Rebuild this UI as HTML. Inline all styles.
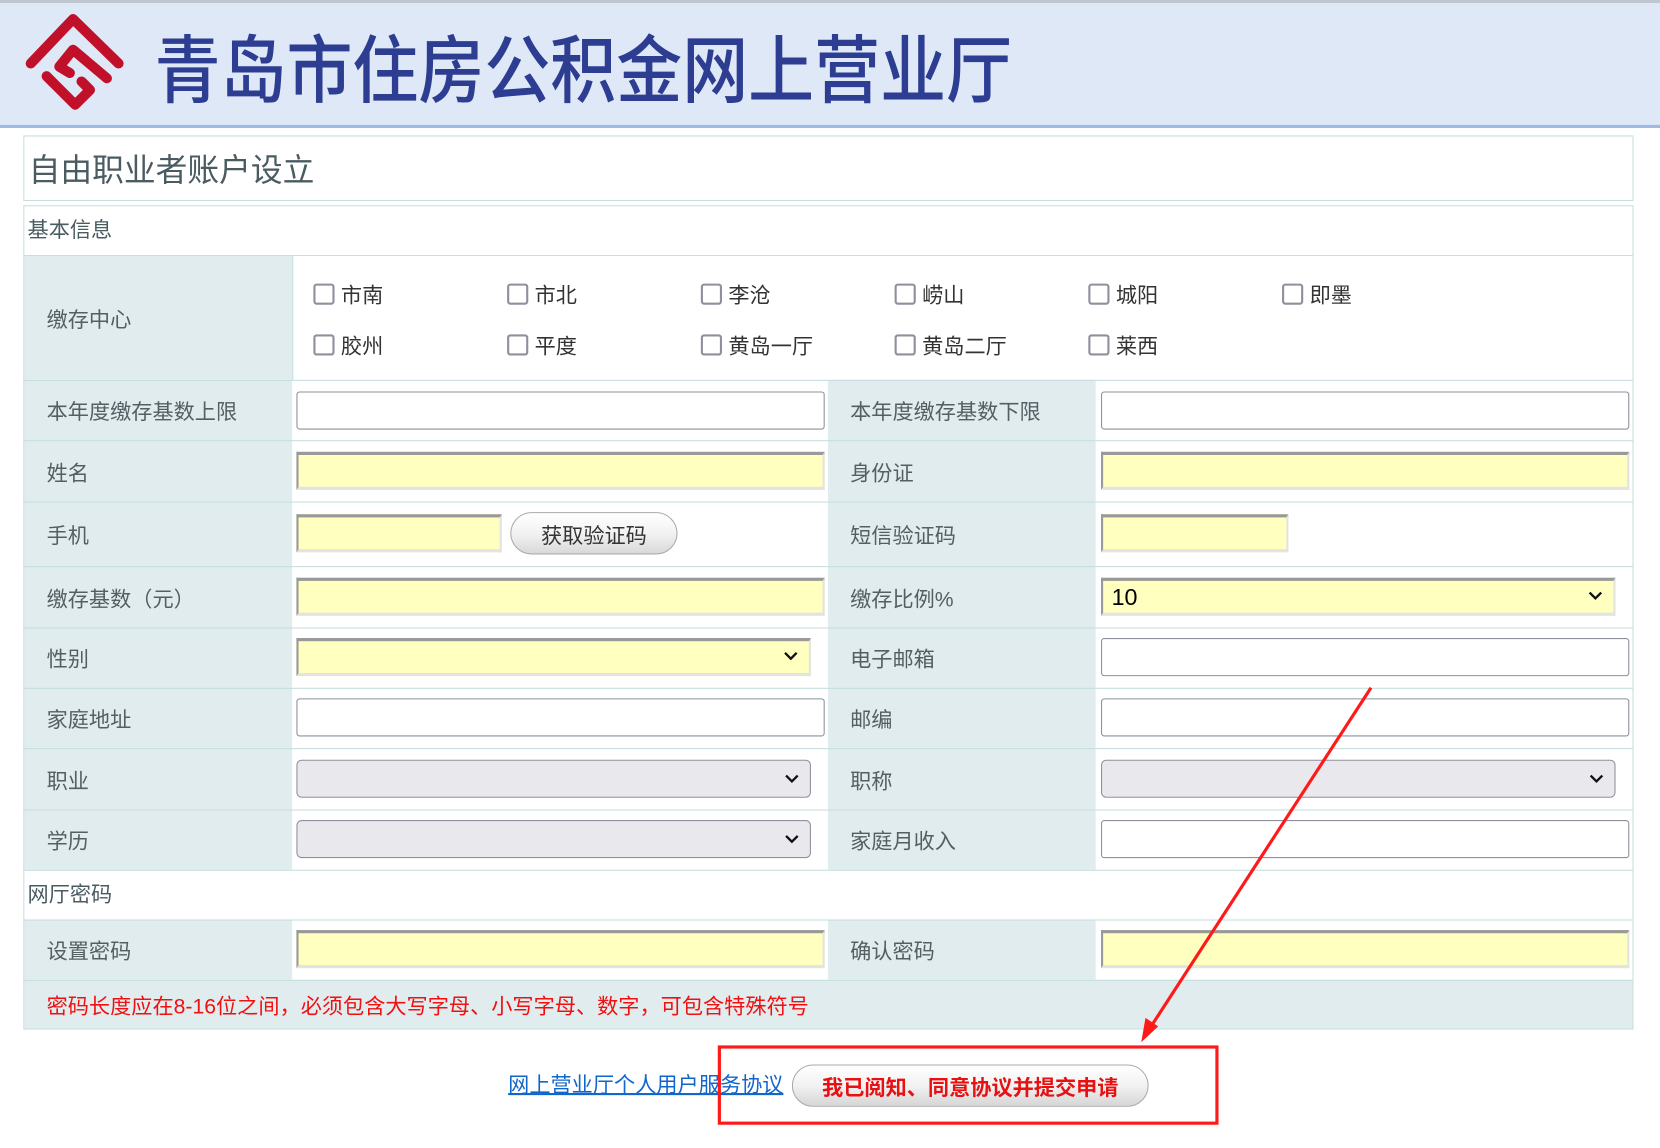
<!DOCTYPE html>
<html><head><meta charset="utf-8">
<style>
html,body{margin:0;padding:0;background:#fff;width:1660px;height:1148px;overflow:hidden}
#w{position:absolute;left:0;top:0;width:1568px;height:1085px;transform:scale(1.05867,1.0581);transform-origin:0 0;font-family:"Liberation Sans","Noto Sans CJK SC",sans-serif}
.a{position:absolute;box-sizing:border-box}
.lab{position:absolute;box-sizing:border-box;background:#e1ecef;color:#555f63;font-size:20px;display:flex;align-items:center;padding-left:21px}
.hl{position:absolute;left:22px;width:1521px;height:1px;background:#c5dede}
.inp{position:absolute;box-sizing:border-box;height:36px;background:#fff;border:1px solid #8f8f9d;border-radius:3px}
.yel{position:absolute;box-sizing:border-box;height:36px;background:#ffffc0;border-top:3px solid #999;border-left:2px solid #999;border-right:2px solid #e3e3e3;border-bottom:3px solid #e3e3e3}
.gsel{position:absolute;box-sizing:border-box;height:36px;background:#e9e9ed;border:1px solid #8f8f9d;border-radius:5px}
.chev{position:absolute;right:10px;top:10px}
.cb{position:absolute;font-size:20px;color:#333;display:flex;align-items:center}
.cb i{display:inline-block;border:2px solid #8f8f9d;border-radius:3px;margin-right:6px;box-sizing:border-box;width:20px;height:20px}
</style></head><body>
<div id="w">
<div class="a" style="left:0;top:0;width:1568px;height:3px;background:#bfc6d0"></div>
<div class="a" style="left:0;top:3px;width:1568px;height:115px;background:#dfe8f6"></div>
<div class="a" style="left:0;top:118px;width:1568px;height:3px;background:#9dbbe3"></div>
<svg class="a" style="left:0;top:0" width="130" height="120" viewBox="0 0 130 120">
<g fill="none" stroke="#c0102a" stroke-width="9.5" stroke-linecap="round" stroke-linejoin="round">
<polyline points="29,60 69,18 112,60"/>
<polyline points="66,69 56,63 69,47 101,74"/>
<polyline points="77,77 85,85 71,99 44,72"/>
</g></svg>
<div class="a" style="left:146px;top:18px;font-family:'Noto Sans CJK SC',sans-serif;font-weight:500;font-size:70px;line-height:88px;color:#2d3d91;white-space:nowrap;transform:scaleX(0.89);transform-origin:0 0">青岛市住房公积金网上营业厅</div>

<div class="a" style="left:22px;top:128px;width:1521px;height:62px;border:1px solid #c5dede"></div>
<div class="a" style="left:27px;top:140px;font-size:30px;color:#4a5b62;line-height:44px">自由职业者账户设立</div>

<div class="a" style="left:22px;top:194px;width:1521px;height:779px;border:1px solid #c5dede"></div>
<div class="a" style="left:26px;top:204px;font-size:20px;color:#4a5b62;line-height:28px">基本信息</div>

<div class="lab" style="left:23px;top:241px;width:253px;height:118px">缴存中心</div>
<div class="lab" style="left:23px;top:359px;width:253px;height:57px">本年度缴存基数上限</div>
<div class="lab" style="left:23px;top:416px;width:253px;height:58px">姓名</div>
<div class="lab" style="left:23px;top:474px;width:253px;height:61px">手机</div>
<div class="lab" style="left:23px;top:535px;width:253px;height:58px">缴存基数（元）</div>
<div class="lab" style="left:23px;top:593px;width:253px;height:57px">性别</div>
<div class="lab" style="left:23px;top:650px;width:253px;height:57px">家庭地址</div>
<div class="lab" style="left:23px;top:707px;width:253px;height:58px">职业</div>
<div class="lab" style="left:23px;top:765px;width:253px;height:57px">学历</div>
<div class="lab" style="left:23px;top:869px;width:253px;height:57px">设置密码</div>

<div class="lab" style="left:782px;top:359px;width:253px;height:57px">本年度缴存基数下限</div>
<div class="lab" style="left:782px;top:416px;width:253px;height:58px">身份证</div>
<div class="lab" style="left:782px;top:474px;width:253px;height:61px">短信验证码</div>
<div class="lab" style="left:782px;top:535px;width:253px;height:58px">缴存比例%</div>
<div class="lab" style="left:782px;top:593px;width:253px;height:57px">电子邮箱</div>
<div class="lab" style="left:782px;top:650px;width:253px;height:57px">邮编</div>
<div class="lab" style="left:782px;top:707px;width:253px;height:58px">职称</div>
<div class="lab" style="left:782px;top:765px;width:253px;height:57px">家庭月收入</div>
<div class="lab" style="left:782px;top:869px;width:253px;height:57px">确认密码</div>

<div class="lab" style="left:23px;top:926px;width:1519px;height:46px;color:#f01010">密码长度应在8-16位之间，必须包含大写字母、小写字母、数字，可包含特殊符号</div>
<div class="a" style="left:26px;top:832px;font-size:20px;color:#4a5b62;line-height:28px">网厅密码</div>

<div class="hl" style="top:241px"></div><div class="hl" style="top:359px"></div><div class="hl" style="top:416px"></div>
<div class="hl" style="top:474px"></div><div class="hl" style="top:535px"></div><div class="hl" style="top:593px"></div>
<div class="hl" style="top:650px"></div><div class="hl" style="top:707px"></div><div class="hl" style="top:765px"></div>
<div class="hl" style="top:822px"></div><div class="hl" style="top:869px"></div><div class="hl" style="top:926px"></div>
<div class="a" style="left:276px;top:241px;width:1px;height:118px;background:#c5dede"></div>

<div class="cb" style="left:296px;top:263px"><i></i>市南</div>
<div class="cb" style="left:479px;top:263px"><i></i>市北</div>
<div class="cb" style="left:662px;top:263px"><i></i>李沧</div>
<div class="cb" style="left:845px;top:263px"><i></i>崂山</div>
<div class="cb" style="left:1028px;top:263px"><i></i>城阳</div>
<div class="cb" style="left:1211px;top:263px"><i></i>即墨</div>
<div class="cb" style="left:296px;top:311px"><i></i>胶州</div>
<div class="cb" style="left:479px;top:311px"><i></i>平度</div>
<div class="cb" style="left:662px;top:311px"><i></i>黄岛一厅</div>
<div class="cb" style="left:845px;top:311px"><i></i>黄岛二厅</div>
<div class="cb" style="left:1028px;top:311px"><i></i>莱西</div>

<div class="inp" style="left:280px;top:370px;width:499px"></div>
<div class="inp" style="left:1040px;top:370px;width:499px"></div>
<div class="yel" style="left:280px;top:427px;width:499px"></div>
<div class="yel" style="left:1040px;top:427px;width:499px"></div>
<div class="yel" style="left:280px;top:486px;width:194px"></div>
<div class="a" style="left:482px;top:484px;width:158px;height:40px;border:1px solid #aaa;border-radius:20px;background:linear-gradient(#fff,#f2f2f2 50%,#d9d9d9);font-size:20px;color:#333;display:flex;align-items:center;justify-content:center">获取验证码</div>
<div class="yel" style="left:1040px;top:486px;width:177px"></div>
<div class="yel" style="left:280px;top:546px;width:499px"></div>
<div class="yel" style="left:1040px;top:546px;width:486px;font-size:22px;color:#000;line-height:32px;padding-left:8px">10<svg class="chev" style="top:9px" width="14" height="10" viewBox="0 0 14 10"><polyline points="1.5,2 7,7.5 12.5,2" fill="none" stroke="#111" stroke-width="2.2"/></svg></div>
<div class="yel" style="left:280px;top:603px;width:486px"><svg class="chev" style="top:9px" width="14" height="10" viewBox="0 0 14 10"><polyline points="1.5,2 7,7.5 12.5,2" fill="none" stroke="#111" stroke-width="2.2"/></svg></div>
<div class="inp" style="left:1040px;top:603px;width:499px"></div>
<div class="inp" style="left:280px;top:660px;width:499px"></div>
<div class="inp" style="left:1040px;top:660px;width:499px"></div>
<div class="gsel" style="left:280px;top:718px;width:486px"><svg class="chev" style="top:12px" width="14" height="10" viewBox="0 0 14 10"><polyline points="1.5,2 7,7.5 12.5,2" fill="none" stroke="#111" stroke-width="2.2"/></svg></div>
<div class="gsel" style="left:1040px;top:718px;width:486px"><svg class="chev" style="top:12px" width="14" height="10" viewBox="0 0 14 10"><polyline points="1.5,2 7,7.5 12.5,2" fill="none" stroke="#111" stroke-width="2.2"/></svg></div>
<div class="gsel" style="left:280px;top:775px;width:486px"><svg class="chev" style="top:12px" width="14" height="10" viewBox="0 0 14 10"><polyline points="1.5,2 7,7.5 12.5,2" fill="none" stroke="#111" stroke-width="2.2"/></svg></div>
<div class="inp" style="left:1040px;top:775px;width:499px"></div>
<div class="yel" style="left:280px;top:879px;width:499px"></div>
<div class="yel" style="left:1040px;top:879px;width:499px"></div>

<div class="a" style="left:480px;top:1012px;font-size:20px;line-height:28px;color:#1166cc;text-decoration:underline;white-space:nowrap">网上营业厅个人用户服务协议</div>
<div class="a" style="left:748px;top:1006px;width:337px;height:40px;border:1px solid #aaa;border-radius:20px;background:linear-gradient(#fff,#f2f2f2 50%,#d6d6d6);font-size:20px;font-weight:700;color:#e81010;display:flex;align-items:center;justify-content:center">我已阅知、同意协议并提交申请</div>
<div class="a" style="left:678px;top:988px;width:473px;height:75px;border:3px solid #ff1a1a"></div>
<svg class="a" style="left:0;top:0" width="1568" height="1085">
<line x1="1295" y1="650" x2="1086" y2="972" stroke="#ff1a1a" stroke-width="3"/>
<polygon points="1078,985 1082,962 1094,970" fill="#ff1a1a"/>
</svg>
</div>
</body></html>
